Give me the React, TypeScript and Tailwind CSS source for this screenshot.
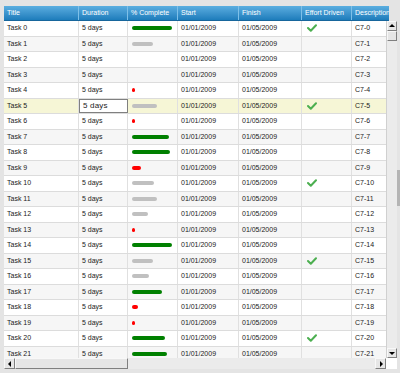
import React from "react";

type Row = { w: number; c: "g" | "s" | "r" | "n"; eff: boolean };

const bars: [number, Row["c"]][] = [
  [40, "g"], [21, "s"], [0, "n"], [0, "n"], [3, "r"], [25, "s"], [3, "r"], [37, "g"],
  [38, "g"], [9, "r"], [22, "s"], [25, "s"], [16, "s"], [3, "r"], [40, "g"], [21, "s"],
  [17, "s"], [30, "g"], [6, "r"], [3, "r"], [33, "g"], [35, "g"],
];

const barColor: Record<string, string> = { g: "#008000", s: "#c0c0c0", r: "#ff0000", n: "transparent" };

function Check() {
  return (
    <svg width="10" height="8" viewBox="0 0 10 8">
      <path d="M1 4 L3.8 6.8 L9 1.2" fill="none" stroke="#4caf50" strokeWidth="2" strokeLinecap="round" strokeLinejoin="round" />
    </svg>
  );
}

function Tri({ dir }: { dir: "up" | "down" | "left" | "right" }) {
  const pts = { up: "1,5 4,2 7,5", down: "1,3 4,6 7,3", left: "5,1 2,4 5,7", right: "3,1 6,4 3,7" }[dir];
  return (
    <svg width="8" height="8" viewBox="0 0 8 8">
      <polygon points={pts} fill="#000" />
    </svg>
  );
}

const cols = [
  { t: "Title", w: "w-[75px]" },
  { t: "Duration", w: "w-[49px]" },
  { t: "% Complete", w: "w-[50px]" },
  { t: "Start", w: "w-[61px]" },
  { t: "Finish", w: "w-[63px]" },
  { t: "Effort Driven", w: "w-[50px]" },
  { t: "Description", w: "w-[37px]" },
];

export default function App() {
  return (
    <div className="w-[400px] h-[373px] bg-[#e4e4e4] overflow-hidden relative text-[7px] text-[#222]" style={{ fontFamily: '"Liberation Sans", Arial, sans-serif' }}>
      <div className="pl-[4px] pt-[6px] flex flex-col w-[397px]">
        {/* header */}
        <div className="flex h-[15px] w-[393px]">
          <div className="flex w-[385px] overflow-hidden bg-gradient-to-b from-[#5aaee0] to-[#1c7cbb] border-b border-[#17669c] shrink-0">
            {cols.map((c, i) => (
              <div key={c.t} className={`${c.w} shrink-0 ${i < 6 ? "border-r border-[#7ec0e8]" : ""} text-white pl-[3px] flex items-center whitespace-nowrap`}>
                {c.t}
              </div>
            ))}
          </div>
          <div className="flex-1 bg-[#e4e4e4]" />
        </div>
        {/* body */}
        <div className="flex h-[337px]">
          <div className="w-[382px] overflow-hidden shrink-0">
            {bars.map(([w, c], i) => {
              const sel = i === 5;
              const bg = sel ? "bg-[#f6f6d6]" : i % 2 === 1 ? "bg-[#f6f6f6]" : "bg-white";
              return (
                <div key={i} className={`flex h-[15.5px] border-b border-[#dcdcdc] ${bg}`}>
                  <div className="w-[75px] shrink-0 border-r border-[#e0e0e0] pl-[3px] flex items-center">Task {i}</div>
                  {sel ? (
                    <div className="w-[49px] shrink-0 border border-[#808080] bg-white pl-[3px] flex items-center text-[8px] tracking-[0.2px]">5 days</div>
                  ) : (
                    <div className="w-[49px] shrink-0 border-r border-[#e0e0e0] pl-[3px] flex items-center">5 days</div>
                  )}
                  <div className="w-[50px] shrink-0 border-r border-[#e0e0e0] pl-[4px] flex items-center">
                    {w > 0 && <div className="h-[4px] rounded-full" style={{ width: w, background: barColor[c] }} />}
                  </div>
                  <div className="w-[61px] shrink-0 border-r border-[#e0e0e0] pl-[3px] flex items-center">01/01/2009</div>
                  <div className="w-[63px] shrink-0 border-r border-[#e0e0e0] pl-[3px] flex items-center">01/05/2009</div>
                  <div className="w-[50px] shrink-0 border-r border-[#e0e0e0] pl-[5px] flex items-center">{i % 5 === 0 && <Check />}</div>
                  <div className="w-[50px] shrink-0 pl-[3px] flex items-center">C7-{i}</div>
                </div>
              );
            })}
          </div>
          {/* vertical scrollbar */}
          <div className="w-[11px] flex flex-col bg-[#ebebeb] border-l border-[#d0d0d0]">
            <div className="h-[10px] bg-[#e6e6e6] border border-[#f8f8f8] border-r-[#808080] border-b-[#808080] flex items-center justify-center"><Tri dir="up" /></div>
            <div className="h-[10px] bg-[#e6e6e6] border border-[#f8f8f8] border-r-[#808080] border-b-[#808080]" />
            <div className="flex-1" />
            <div className="h-[10px] bg-[#e6e6e6] border border-[#f8f8f8] border-r-[#808080] border-b-[#808080] flex items-center justify-center"><Tri dir="down" /></div>
          </div>
        </div>
        {/* horizontal scrollbar */}
        <div className="flex h-[11px]">
          <div className="w-[382px] flex bg-[#ebebeb]">
            <div className="w-[11px] bg-[#e6e6e6] border border-[#f8f8f8] border-r-[#808080] border-b-[#808080] flex items-center justify-center"><Tri dir="left" /></div>
            <div className="w-[113px] bg-[#e6e6e6] border border-[#f8f8f8] border-r-[#808080] border-b-[#808080]" />
            <div className="flex-1" />
            <div className="w-[11px] bg-[#e6e6e6] border border-[#f8f8f8] border-r-[#808080] border-b-[#808080] flex items-center justify-center"><Tri dir="right" /></div>
          </div>
          <div className="w-[11px] bg-white" />
        </div>
      </div>
      <div className="absolute right-0 top-[170px] w-[3px] h-[36px] bg-[#b4b4b4]" />
    </div>
  );
}
